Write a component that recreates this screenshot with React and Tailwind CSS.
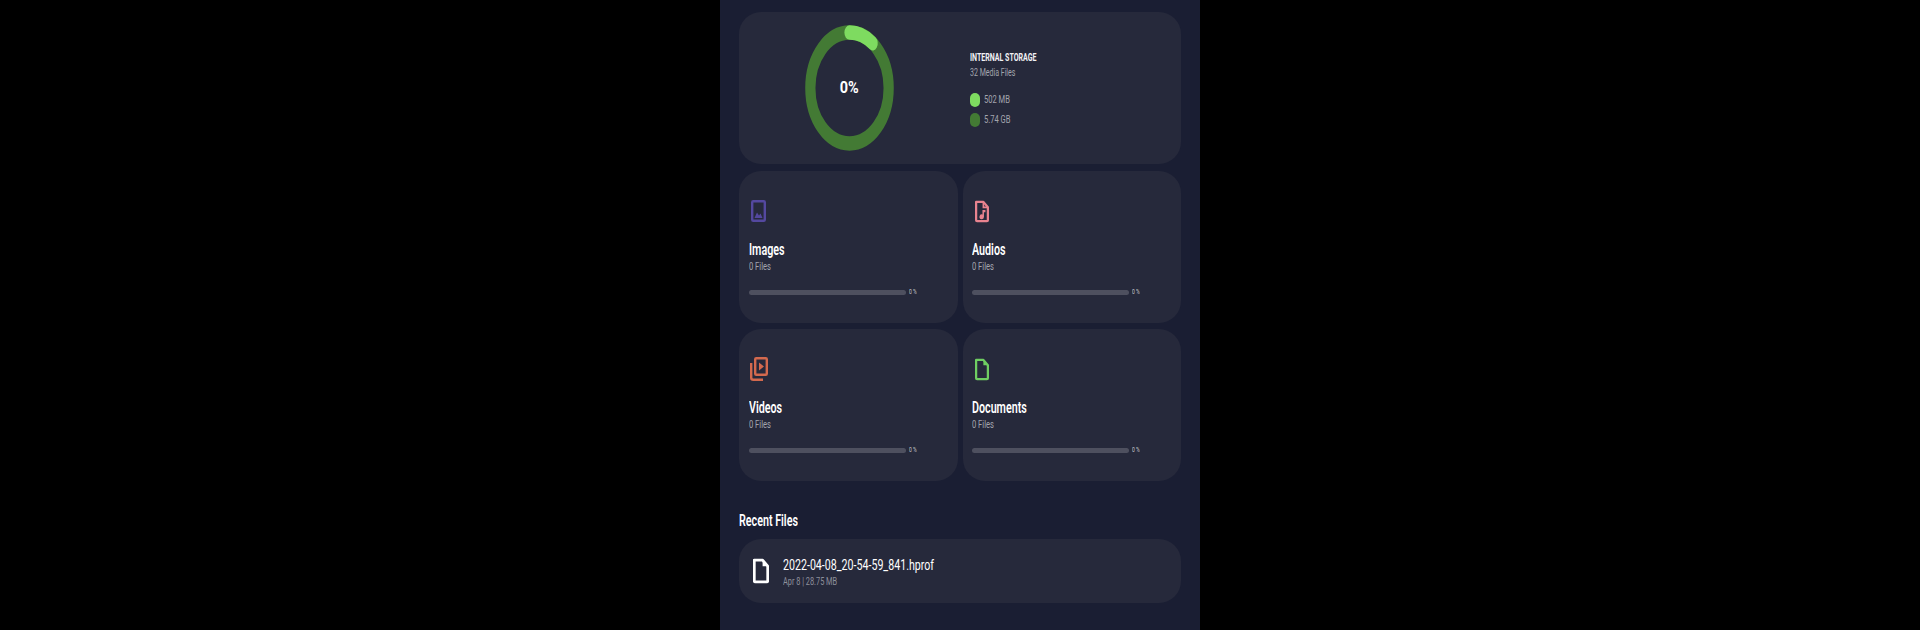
const squish = "block w-fit origin-left whitespace-nowrap";
const font = { fontFamily: "Roboto, sans-serif" };

const ImageIcon = () => (
  <svg width="15" height="22" viewBox="0 0 15 22" fill="none">
    <rect x="1.2" y="1.2" width="12.6" height="19.6" rx="1" stroke="#54489f" strokeWidth="2.4" />
    <path d="M3.5 18 L6 12.5 L8 15.5 L9.5 13.5 L11.5 18 Z" fill="#54489f" />
  </svg>
);

const AudioIcon = () => (
  <svg width="14" height="23" viewBox="0 0 15 23" fill="none">
    <path d="M1.2 1.2 H9 L13.8 7 V20.8 a1 1 0 0 1 -1 1 H2.2 a1 1 0 0 1 -1 -1 Z" stroke="#e8838f" strokeWidth="2.4" strokeLinejoin="round" />
    <path d="M9 1 V7 H14" stroke="#e8838f" strokeWidth="1.8" />
    <path d="M8 10 H11.2 V12.4 H9.6 V17.2 a2.4 2.6 0 1 1 -1.6 -2.4 Z" fill="#e8838f" />
  </svg>
);

const VideoIcon = () => (
  <svg width="18" height="24" viewBox="0 0 18 24" fill="none">
    <rect x="5.2" y="1.2" width="11.6" height="16.6" rx="1" stroke="#d3694e" strokeWidth="2.4" />
    <path d="M1.2 6 V20.8 a2 2 0 0 0 2 2 H13" stroke="#d3694e" strokeWidth="2.4" />
    <path d="M9 5.5 L14 9.5 L9 13.5 Z" fill="#d3694e" />
  </svg>
);

const DocIcon = ({ color = "#6fce62", w = 14, h = 23, sw = 2.4 }) => (
  <svg width={w} height={h} viewBox="0 0 15 23" fill="none">
    <path d="M1.2 1.2 H9 L13.8 7 V20.8 a1 1 0 0 1 -1 1 H2.2 a1 1 0 0 1 -1 -1 Z" stroke={color} strokeWidth={sw} strokeLinejoin="round" />
    <path d="M9 1.2 V7 H13.8 Z" fill={color} />
  </svg>
);

const cats = [
  { name: "Images", icon: <ImageIcon />, pad: "pl-[10px]", iconPad: "pl-[2px]" },
  { name: "Audios", icon: <AudioIcon />, pad: "pl-[9px]", iconPad: "pl-[3px]" },
  { name: "Videos", icon: <VideoIcon />, pad: "pl-[10px]", iconPad: "pl-[1px]" },
  { name: "Documents", icon: <DocIcon />, pad: "pl-[9px]", iconPad: "pl-[3px]" },
];

function CatCard({ name, icon, pad, iconPad }) {
  return (
    <div className={`h-[152px] rounded-[22px] bg-[#26293b] pt-[28px] ${pad}`}>
      <div className={`flex h-[24px] items-center ${iconPad}`}>{icon}</div>
      <span className={`${squish} mt-[17px] scale-x-[0.67] text-[16px] leading-[20px] font-semibold text-white`}>{name}</span>
      <span className={`${squish} scale-x-[0.72] text-[10.5px] leading-[14px] text-[#a3a5ae]`}>0 Files</span>
      <div className="mt-[14px] flex items-center">
        <div className="h-[5px] w-[157px] rounded-full bg-[#4e505f]" />
        <span className={`${squish} ml-[3px] scale-x-[0.72] text-[7px] leading-[8px] text-[#c5c6cc]`}>0 %</span>
      </div>
    </div>
  );
}

export default function App() {
  return (
    <div className="h-[630px] overflow-hidden bg-black" style={font}>
      <div className="mx-auto h-full w-[480px] bg-[#1a1e33] px-[19px] pt-[12px]">
        {/* storage */}
        <div className="grid h-[152px] grid-cols-2 rounded-[22px] bg-[#26293b]">
          <div className="flex items-center justify-center">
            <div className="relative h-[126px] w-[89px]">
              <svg className="h-full w-full" viewBox="0 0 100 100" preserveAspectRatio="none" fill="none">
                <circle cx="50" cy="50" r="44" stroke="#437a34" strokeWidth="11.5" />
                <path d="M50 6 A44 44 0 0 1 76 14.5" stroke="#7edb60" strokeWidth="11.5" strokeLinecap="round" />
              </svg>
              <div className="absolute inset-0 flex items-center justify-center">
                <span className="scale-x-[0.85] text-[17px] font-bold text-white">0%</span>
              </div>
            </div>
          </div>
          <div className="pl-[10px] pt-[39px]">
            <span className={`${squish} scale-x-[0.64] text-[11px] leading-[14px] font-bold text-[#f2f2f5]`}>INTERNAL STORAGE</span>
            <span className={`${squish} mt-[1px] scale-x-[0.67] text-[10.5px] leading-[14px] text-[#a3a5ae]`}>32 Media Files</span>
            <div className="mt-[13px] flex flex-col gap-[6px]">
              <div className="flex h-[14px] items-center gap-[4px]">
                <div className="h-[14px] w-[10px] rounded-full bg-[#7edb60]" />
                <span className={`${squish} scale-x-[0.72] text-[10.5px] text-[#a3a5ae]`}>502 MB</span>
              </div>
              <div className="flex h-[14px] items-center gap-[4px]">
                <div className="h-[14px] w-[10px] rounded-full bg-[#437a34]" />
                <span className={`${squish} scale-x-[0.72] text-[10.5px] text-[#a3a5ae]`}>5.74 GB</span>
              </div>
            </div>
          </div>
        </div>

        {/* categories */}
        <div className="mt-[7px] grid grid-cols-[219px_218px] gap-x-[5px] gap-y-[6px]">
          {cats.map((c) => (
            <CatCard key={c.name} {...c} />
          ))}
        </div>

        {/* recent */}
        <span className={`${squish} mt-[30px] scale-x-[0.67] text-[16px] leading-[20px] font-semibold text-white`}>Recent Files</span>
        <div className="mt-[8px] flex h-[64px] items-center rounded-[22px] bg-[#26293b] pl-[14px]">
          <DocIcon color="#ffffff" w={16} h={28} sw={2.6} />
          <div className="ml-[14px] pt-[2px]">
            <span className={`${squish} scale-x-[0.71] text-[15px] leading-[19px] text-white`}>2022-04-08_20-54-59_841.hprof</span>
            <span className={`${squish} scale-x-[0.7] text-[10.5px] leading-[14px] text-[#8e909b]`}>Apr 8 | 28.75 MB</span>
          </div>
        </div>
      </div>
    </div>
  );
}
